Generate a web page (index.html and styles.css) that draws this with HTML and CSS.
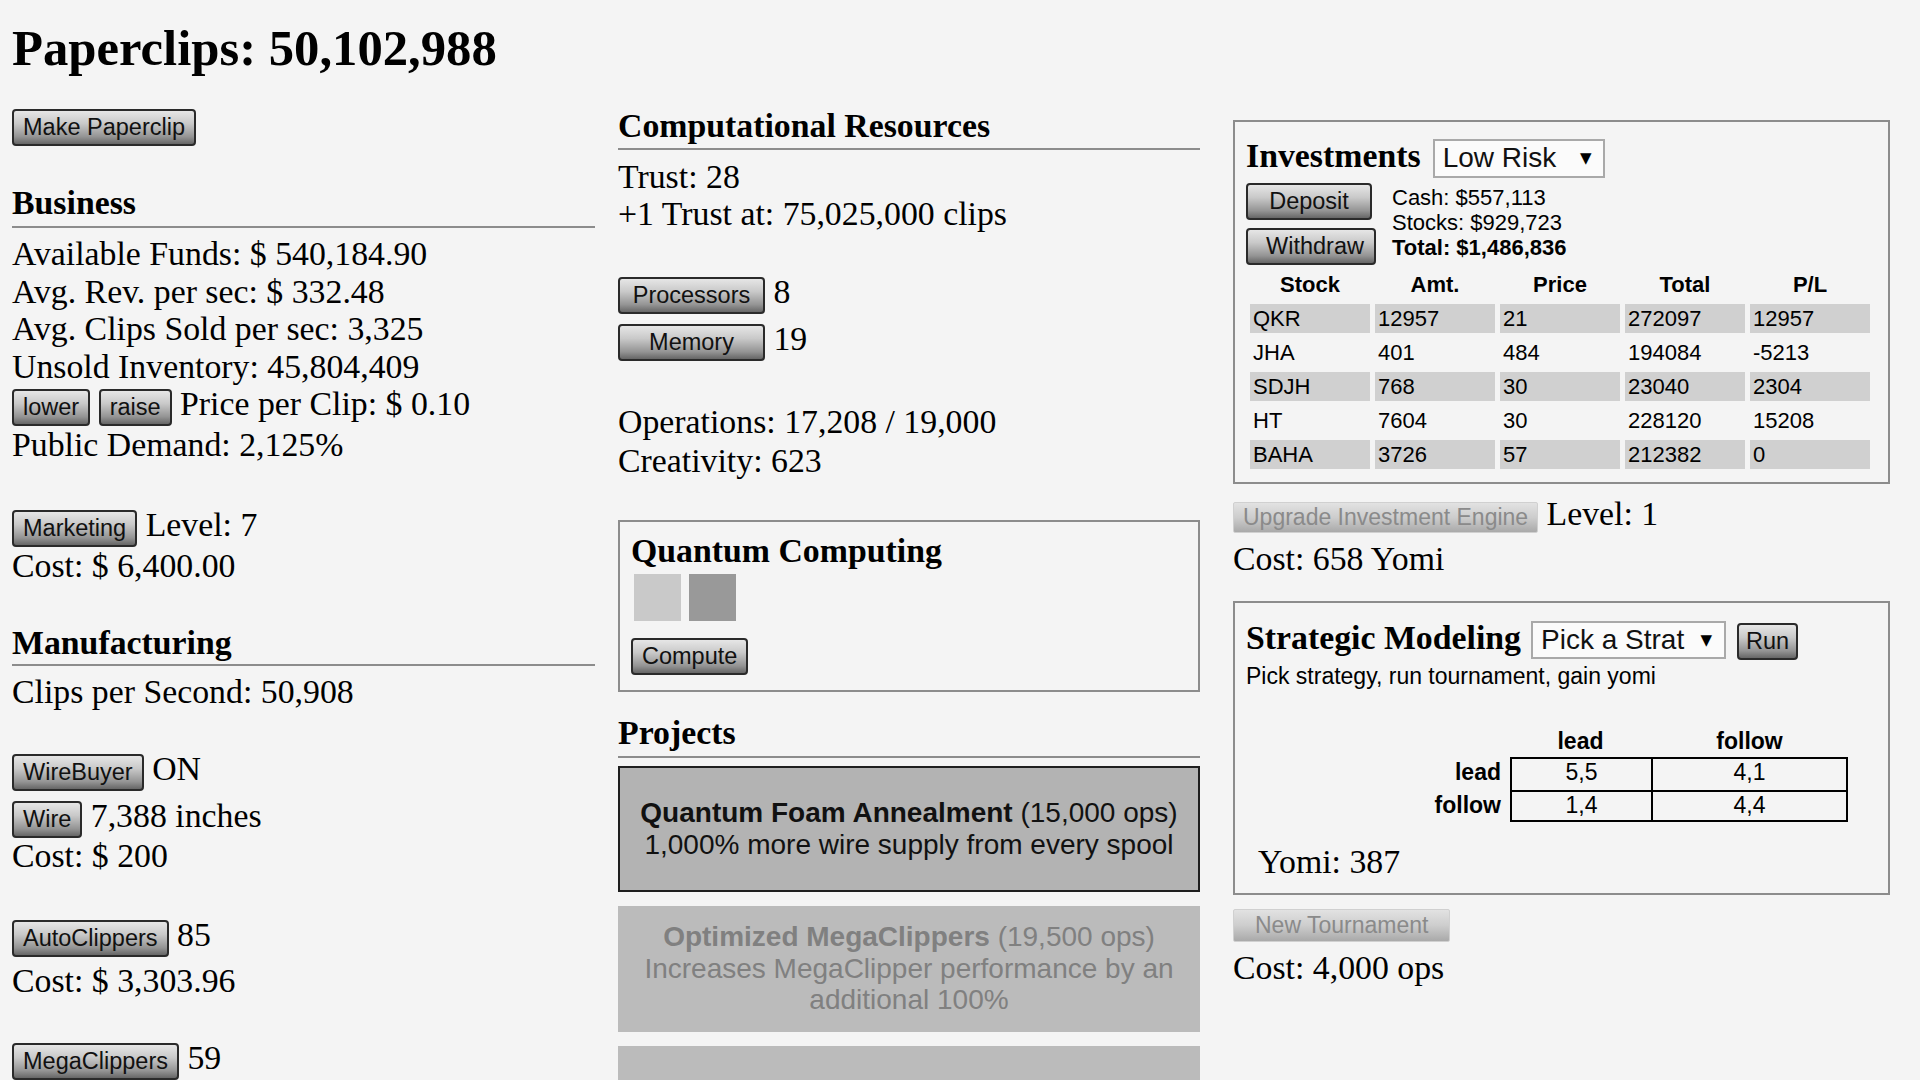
FILE: index.html
```html
<!DOCTYPE html>
<html>
<head>
<meta charset="utf-8">
<title>Universal Paperclips</title>
<link rel="stylesheet" href="styles.css">
</head>
<body>
<div class="page">
  <h1 class="title">Paperclips: 50,102,988</h1>
  <div class="cols">
    <div class="col col-left">
      <div class="line m-make"><button class="btn">Make Paperclip</button></div>
      <h3 class="sect m-business">Business</h3>
      <hr class="rule r-business">
      <div class="line m-afterrule1">Available Funds: $ 540,184.90</div>
      <div class="line">Avg. Rev. per sec: $ 332.48</div>
      <div class="line">Avg. Clips Sold per sec: 3,325</div>
      <div class="line">Unsold Inventory: 45,804,409</div>
      <div class="line"><button class="btn">lower</button> <button class="btn">raise</button> Price per Clip: $ 0.10</div>
      <div class="line">Public Demand: 2,125%</div>
      <div class="line m-42"><button class="btn">Marketing</button> Level: 7</div>
      <div class="line">Cost: $ 6,400.00</div>
      <h3 class="sect m-manu">Manufacturing</h3>
      <hr class="rule r-manu">
      <div class="line m-afterrule2">Clips per Second: 50,908</div>
      <div class="line m-wirebuyer"><button class="btn">WireBuyer</button> ON</div>
      <div class="line m-6"><button class="btn">Wire</button> 7,388 inches</div>
      <div class="line m-wirecost">Cost: $ 200</div>
      <div class="line m-auto"><button class="btn">AutoClippers</button> 85</div>
      <div class="line m-5">Cost: $ 3,303.96</div>
      <div class="line m-mega"><button class="btn">MegaClippers</button> 59</div>
    </div>

    <div class="col col-mid">
      <h3 class="sect m-comp">Computational Resources</h3>
      <hr class="rule r-comp">
      <div class="line m-trust">Trust: 28</div>
      <div class="line">+1 Trust at: 75,025,000 clips</div>
      <div class="line m-proc"><button class="btn wide">Processors</button> 8</div>
      <div class="line m-6"><button class="btn wide">Memory</button> 19</div>
      <div class="line m-ops">Operations: 17,208 / 19,000</div>
      <div class="line m-1">Creativity: 623</div>

      <div class="box qbox">
        <div class="qhead">Quantum Computing</div>
        <div class="qubits"><span class="qubit q-light"></span><span class="qubit q-dark"></span></div>
        <button class="btn compute">Compute</button>
      </div>

      <h3 class="sect m-proj">Projects</h3>
      <hr class="rule r-proj">
      <div class="projects">
        <button class="project"><b>Quantum Foam Annealment</b> (15,000 ops)<br>1,000% more wire supply from every spool</button>
        <button class="project off"><b>Optimized MegaClippers</b> (19,500 ops)<br>Increases MegaClipper performance by an additional 100%</button>
        <div class="project off"></div>
      </div>
    </div>

    <div class="col col-right">
      <div class="box invbox">
        <div class="headrow">
          <span class="boxtitle">Investments</span>
          <span class="select sel-risk"><span>Low Risk</span><span class="arrow">▼</span></span>
        </div>
        <div class="invrow">
          <div class="invbtns">
            <button class="btn dep">Deposit</button>
            <button class="btn wd">Withdraw</button>
          </div>
          <div class="invinfo">
            <div>Cash: $557,113</div>
            <div>Stocks: $929,723</div>
            <div><b>Total: $1,486,836</b></div>
          </div>
        </div>
        <table class="stocks">
          <thead>
            <tr><th>Stock</th><th>Amt.</th><th>Price</th><th>Total</th><th>P/L</th></tr>
          </thead>
          <tbody>
            <tr class="shade"><td>QKR</td><td>12957</td><td>21</td><td>272097</td><td>12957</td></tr>
            <tr><td>JHA</td><td>401</td><td>484</td><td>194084</td><td>-5213</td></tr>
            <tr class="shade"><td>SDJH</td><td>768</td><td>30</td><td>23040</td><td>2304</td></tr>
            <tr><td>HT</td><td>7604</td><td>30</td><td>228120</td><td>15208</td></tr>
            <tr class="shade"><td>BAHA</td><td>3726</td><td>57</td><td>212382</td><td>0</td></tr>
          </tbody>
        </table>
      </div>

      <div class="line m-upg"><button class="btn off upg">Upgrade Investment Engine</button> Level: 1</div>
      <div class="line m-7">Cost: 658 Yomi</div>

      <div class="box stratbox">
        <div class="headrow">
          <span class="boxtitle">Strategic Modeling</span>
          <span class="select sel-strat"><span>Pick a Strat</span><span class="arrow">▼</span></span>
          <button class="btn run">Run</button>
        </div>
        <div class="stratdesc">Pick strategy, run tournament, gain yomi</div>
        <div class="payoff">
          <div class="ph"></div>
          <div class="ph">lead</div>
          <div class="ph">follow</div>
          <div class="pl">lead</div>
          <div class="pc c1 r1">5,5</div>
          <div class="pc c2 r1">4,1</div>
          <div class="pl">follow</div>
          <div class="pc c1 r2">1,4</div>
          <div class="pc c2 r2">4,4</div>
        </div>
        <div class="line yomi">Yomi: 387</div>
      </div>

      <button class="btn off tourn">New Tournament</button>
      <div class="line m-cost4k">Cost: 4,000 ops</div>
    </div>
  </div>
</div>
</body>
</html>
```

FILE: styles.css
```css
html, body {
  margin: 0;
  padding: 0;
  background: #f4f4f4;
}

body {
  font-family: "Liberation Serif", "Times New Roman", serif;
  font-size: 33.8px;
  color: #000;
}

.page {
  padding: 19px 0 0 12px;
}

.title {
  margin: 0;
  font-size: 50.7px;
  line-height: 58px;
  font-weight: bold;
}

.cols {
  display: flex;
  align-items: flex-start;
}

.col-left { width: 583px; }
.col-mid { width: 582px; margin-left: 23px; }
.col-right { width: 657px; margin-left: 33px; }

.line {
  line-height: 37.5px;
  white-space: nowrap;
}

.sect {
  margin: 0;
  font-size: 33.8px;
  line-height: 37.5px;
  font-weight: bold;
}

.rule {
  margin: 0;
  height: 0;
  border: 0;
  border-top: 2px solid #8c8c8c;
}

/* vertical rhythm, left column */
.m-make { margin-top: 27.5px; }
.m-business { margin-top: 38.5px; }
.r-business { margin-top: 4px; }
.m-afterrule1 { margin-top: 7.5px; }
.m-manu { margin-top: 39.5px; }
.r-manu { margin-top: 3px; }
.m-afterrule2 { margin-top: 7px; }
.m-42 { margin-top: 42px; }
.m-wirebuyer { margin-top: 39.5px; }
.m-wirecost { margin-top: -1.5px; }
.m-auto { margin-top: 42px; }
.m-mega { margin-top: 39.5px; }
.m-6 { margin-top: 6px; }
.m-5 { margin-top: 5px; }
.m-7 { margin-top: 7.3px; }
.m-1 { margin-top: 1.5px; }

/* middle column */
.m-comp { margin-top: 29.8px; }
.r-comp { margin-top: 4px; }
.m-trust { margin-top: 7.5px; }
.m-proc { margin-top: 40px; }
.m-ops { margin-top: 42px; }
.m-proj { margin-top: 22.5px; }
.r-proj { margin-top: 3.7px; }

/* buttons */
.btn {
  font-family: "Liberation Sans", Arial, sans-serif;
  font-size: 23.5px;
  line-height: 27px;
  color: #111;
  padding: 3px 9px;
  margin: 0;
  border: 2px solid #2a2a2a;
  border-radius: 4px;
  background: linear-gradient(to bottom, #e6e6e6 0%, #c9c9c9 38%, #949494 78%, #666 100%);
  vertical-align: baseline;
  cursor: pointer;
}

.btn.wide {
  width: 147px;
  padding-left: 0;
  padding-right: 0;
}

.btn.off {
  font-size: 23px;
  color: #8a8a8a;
  border: 1px solid #d0d0d0;
  border-radius: 2px;
  padding: 1px 10px;
  background: linear-gradient(to bottom, #e2e2e2 0%, #cdcdcd 50%, #a9a9a9 100%);
  cursor: default;
}

/* boxes */
.box {
  border: 2px solid #8c8c8c;
}

.qbox {
  margin-top: 40.7px;
  padding: 9.8px 11px 15px 11px;
}

.qhead {
  font-weight: bold;
  line-height: 37.5px;
}

.qubits {
  display: flex;
  gap: 8px;
  margin: 4.7px 0 0 3px;
}

.qubit {
  width: 47px;
  height: 47px;
}

.q-light { background: #c9c9c9; }
.q-dark { background: #999; }

.btn.compute {
  display: block;
  margin-top: 17px;
}

/* projects */
.projects {
  margin-top: 8px;
  display: flex;
  flex-direction: column;
  gap: 14px;
}

.project {
  display: block;
  box-sizing: border-box;
  width: 100%;
  height: 126px;
  margin: 0;
  padding: 0 10px;
  border: 2px solid #1e1e1e;
  background: #b3b3b3;
  color: #111;
  font-family: "Liberation Sans", Arial, sans-serif;
  font-size: 28px;
  line-height: 31.5px;
  text-align: center;
}

.project.off {
  border-color: #bbbbbb;
  background: #bbbbbb;
  color: #808080;
}

/* right column */
.invbox {
  margin-top: 43px;
  padding: 15px 10px 8px 11px;
}

.headrow {
  display: flex;
  align-items: baseline;
  white-space: nowrap;
}

.boxtitle {
  font-weight: bold;
  line-height: 37.5px;
}

.select {
  display: inline-flex;
  align-items: center;
  justify-content: space-between;
  box-sizing: border-box;
  height: 39px;
  padding: 0 11px 0 8px;
  border: 2px solid #a9a9a9;
  background: #fbfbfb;
  font-family: "Liberation Sans", Arial, sans-serif;
  font-size: 28px;
  color: #111;
}

.select .arrow {
  font-family: "DejaVu Sans", sans-serif;
  font-size: 15px;
  color: #000;
}

.sel-risk {
  width: 172px;
  margin-left: 12px;
}

.invrow {
  display: flex;
  gap: 16px;
  margin-top: 5.5px;
}

.invbtns {
  display: flex;
  flex-direction: column;
  align-items: flex-start;
  gap: 8px;
}

.btn.dep { width: 126px; padding: 3px 0; }
.btn.wd { width: 130px; padding: 3px 0 3px 8px; }

.invinfo {
  margin-top: 2px;
  font-family: "Liberation Sans", Arial, sans-serif;
  font-size: 22px;
  line-height: 25px;
}

.stocks {
  margin: 0 0 0 -1px;
  border-collapse: separate;
  border-spacing: 5px 5px;
  font-family: "Liberation Sans", Arial, sans-serif;
  font-size: 22px;
  table-layout: fixed;
}

.stocks th,
.stocks td {
  width: 114px;
  height: 29px;
  padding: 0 3px;
  line-height: 29px;
  text-align: left;
}

.stocks th {
  text-align: center;
  font-weight: bold;
}

.stocks tr.shade td {
  background: #d0d0d0;
}

.m-upg { margin-top: 10.8px; }

.btn.upg { padding: 1px 9px; }

.stratbox {
  margin-top: 23.7px;
  padding: 15.5px 10px 12.5px 11px;
}

.sel-strat {
  width: 195px;
  height: 38px;
  margin-left: 10px;
  padding-right: 12px;
}

.btn.run {
  margin-left: 11px;
  padding: 3px 7px;
}

.stratdesc {
  margin-top: 3.5px;
  font-family: "Liberation Sans", Arial, sans-serif;
  font-size: 23px;
  line-height: 26px;
}

.payoff {
  display: grid;
  grid-template-columns: 82px 141px 197px;
  grid-template-rows: 29px 33px 32px;
  margin: 39px 0 0 182px;
  font-family: "Liberation Sans", Arial, sans-serif;
  font-size: 23px;
  line-height: 26px;
}

.ph {
  text-align: center;
  font-weight: bold;
}

.pl {
  text-align: right;
  font-weight: bold;
  padding-right: 9px;
  padding-top: 2px;
}

.pc {
  box-sizing: border-box;
  text-align: center;
  border-top: 2px solid #000;
  border-left: 2px solid #000;
}

.pc.c2 { border-right: 2px solid #000; }
.pc.r2 { border-bottom: 2px solid #000; }

.yomi {
  margin: 21px 0 0 12px;
}

.btn.tourn {
  display: block;
  margin-top: 14px;
  padding: 2px 21px;
}

.m-cost4k { margin-top: 6.8px; }
```
